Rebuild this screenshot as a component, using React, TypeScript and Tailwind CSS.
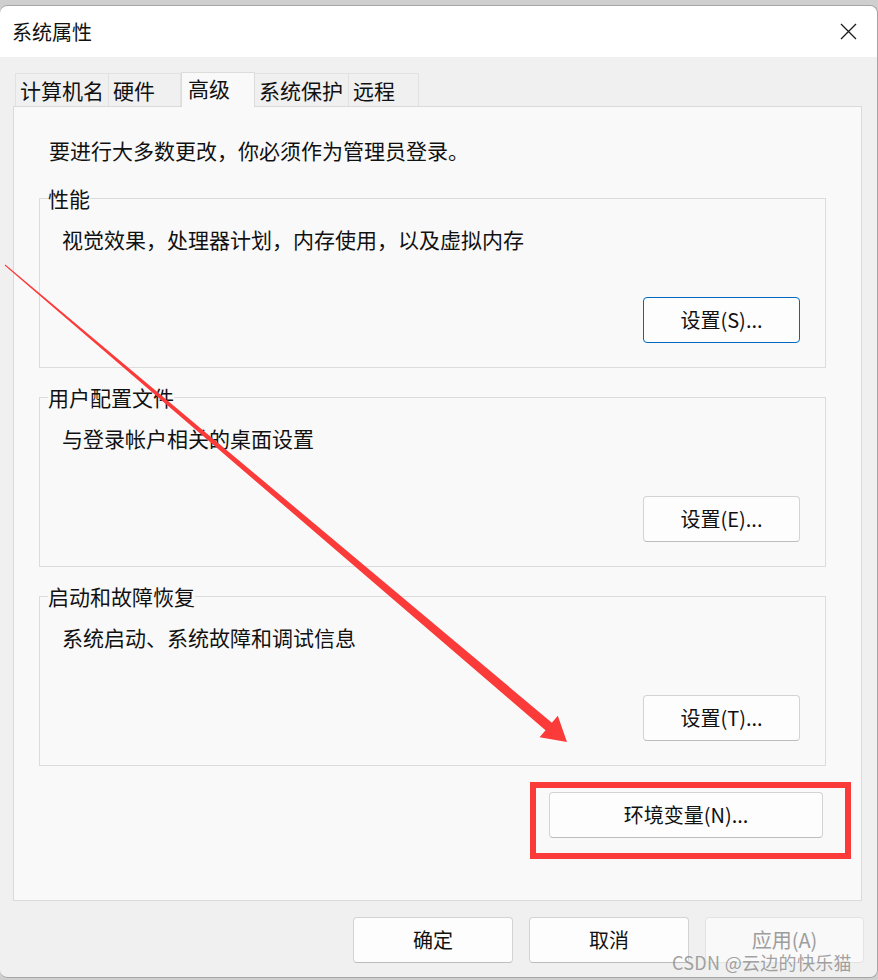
import React from 'react'

const font = { fontFamily: '"Noto Sans CJK SC", "Noto Sans", sans-serif' }

const Tab = ({ label, width, active = false }: { label: string; width: string; active?: boolean }) => (
  <div
    className={
      active
        ? `${width} h-[35px] -mb-px z-10 flex items-start pt-[1px] px-[6px] whitespace-nowrap bg-[#f9f9f9] border border-b-0 border-[#dcdcdc] text-[21px] leading-[28px] text-[#111]`
        : `${width} h-[33px] flex items-start pt-[2px] px-[4px] whitespace-nowrap bg-[#f0f0f0] border border-b-0 border-l-0 border-[#e2e2e2] first:border-l text-[21px] leading-[28px] text-[#111]`
    }
  >
    {label}
  </div>
)

const WinButton = ({
  children,
  width,
  focused = false,
  disabled = false,
}: {
  children: React.ReactNode
  width: string
  focused?: boolean
  disabled?: boolean
}) => (
  <div
    className={`${width} h-[46px] flex items-center justify-center rounded-[4px] text-[20px] leading-none ${
      focused
        ? 'bg-[#fdfdfd] border border-[#0067c0] text-[#111]'
        : disabled
          ? 'bg-[#f9f9f9] border border-[#e3e3e3] text-[#9d9d9d]'
          : 'bg-[#fdfdfd] border border-[#d3d3d3] border-b-[#bdbdbd] text-[#111]'
    }`}
  >
    {children}
  </div>
)

const GroupBox = ({
  title,
  desc,
  button,
  focused = false,
}: {
  title: string
  desc: string
  button: string
  focused?: boolean
}) => (
  <div className="h-[170px] border border-[#dcdcdc] flex flex-col">
    <div className="-mt-[15px] ml-[8px] self-start bg-[#f9f9f9] text-[21px] leading-[28px] text-[#111]">
      {title}
    </div>
    <div className="mt-[13px] ml-[22px] text-[21px] leading-[28px] text-[#111]">{desc}</div>
    <div className="mt-auto mb-[24px] mr-[25px] flex justify-end">
      <WinButton width="w-[157px]" focused={focused}>
        {button}
      </WinButton>
    </div>
  </div>
)

export default function App() {
  return (
    <div className="relative w-[878px] h-[980px] bg-[#cfcfcf] flex flex-col overflow-hidden" style={font}>
      <div className="h-[5px] shrink-0" />
      <div className="h-[973px] shrink-0 flex flex-col rounded-[8px] overflow-hidden border border-[#a5a5a5] border-l-0">
        {/* title bar */}
        <div className="h-[51px] shrink-0 bg-white flex items-center justify-between pl-[12px] pr-[20px]">
          <span className="text-[20px] leading-none text-[#111]">系统属性</span>
          <svg width="17" height="17" viewBox="0 0 17 17">
            <path d="M1 1L16 16M16 1L1 16" stroke="#1a1a1a" strokeWidth="1.3" />
          </svg>
        </div>

        <div className="flex-1 bg-[#f0f0f0] flex flex-col pl-[13px] pr-[15px] pt-[14px]">
          {/* tabs */}
          <div className="flex items-end h-[35px] pl-[2px]">
            <Tab label="计算机名" width="w-[94px]" />
            <Tab label="硬件" width="w-[72px]" />
            <Tab label="高级" width="w-[74px]" active />
            <Tab label="系统保护" width="w-[94px]" />
            <Tab label="远程" width="w-[70px]" />
          </div>

          {/* panel */}
          <div className="relative h-[795px] bg-[#f9f9f9] border border-[#dadada] flex flex-col pl-[25px] pr-[35px]">
            <div className="mt-[29px] ml-[10px] text-[21px] leading-[28px] text-[#111]">
              要进行大多数更改，你必须作为管理员登录。
            </div>
            <div className="mt-[34px] flex flex-col gap-[29px]">
              <GroupBox title="性能" desc="视觉效果，处理器计划，内存使用，以及虚拟内存" button="设置(S)..." focused />
              <GroupBox title="用户配置文件" desc="与登录帐户相关的桌面设置" button="设置(E)..." />
              <GroupBox title="启动和故障恢复" desc="系统启动、系统故障和调试信息" button="设置(T)..." />
            </div>
            <div className="mt-[26px] flex justify-end pr-[3px]">
              <WinButton width="w-[274px]">环境变量(N)...</WinButton>
            </div>

            {/* red annotation box */}
            <div className="absolute left-[516px] top-[675px] w-[321px] h-[77px] border-[6px] border-[#fb3a3a]" />
          </div>

          {/* bottom buttons */}
          <div className="mt-[16px] flex justify-end gap-[16px] -mr-[2px]">
            <WinButton width="w-[160px]">确定</WinButton>
            <WinButton width="w-[160px]">取消</WinButton>
            <WinButton width="w-[159px]" disabled>
              应用(A)
            </WinButton>
          </div>
        </div>
      </div>

      {/* watermark */}
      <div className="absolute left-[672px] top-[949px] text-[18px] leading-[26px] tracking-[0.3px] text-[#8a8a8a]/80">
        CSDN @云边的快乐猫
      </div>

      {/* red arrow */}
      <svg className="absolute inset-0 pointer-events-none" width="878" height="980" viewBox="0 0 878 980">
        <polygon
          points="5.3,264.6 551.9,722.7 557.8,715.8 567,742 539.6,737.2 545.5,730.3 4.7,265.4"
          fill="#fb3a3a"
        />
      </svg>
    </div>
  )
}
